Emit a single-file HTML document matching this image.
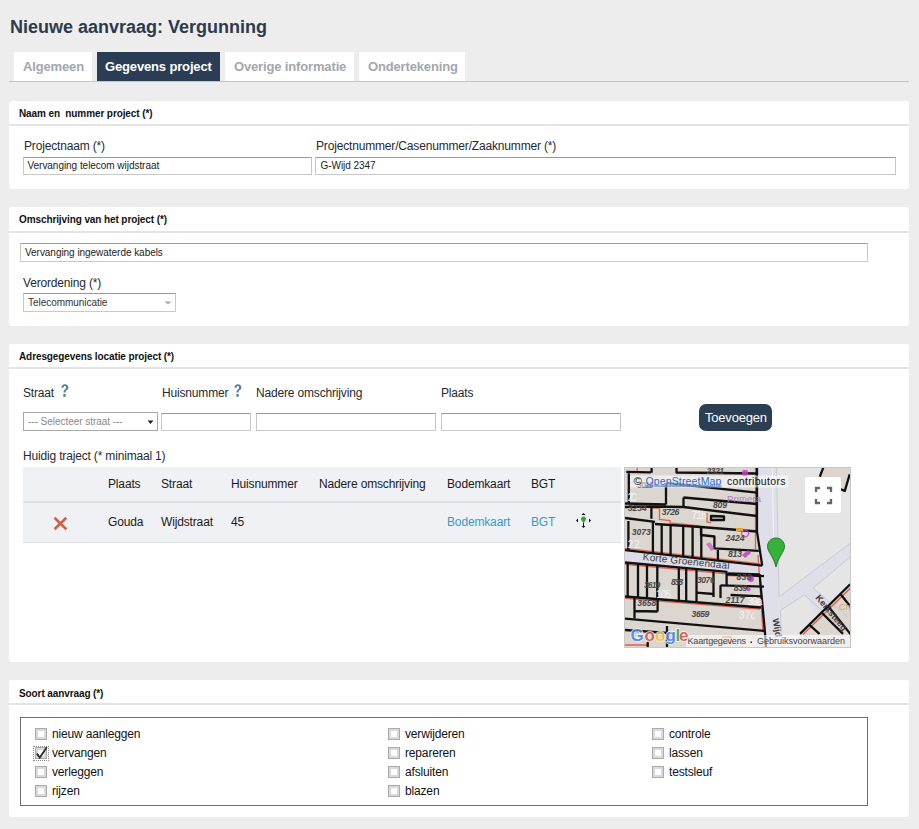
<!DOCTYPE html>
<html><head><meta charset="utf-8">
<style>
*{box-sizing:border-box;margin:0;padding:0}
html,body{width:919px;height:829px;overflow:hidden;background:#ededed;font-family:"Liberation Sans",sans-serif;color:#333}
.a{position:absolute;white-space:pre;line-height:1}
.title{left:10px;top:18px;font-size:18px;font-weight:bold;color:#2c3a4b}
.tab{position:absolute;top:52px;height:29px;background:#fff;color:#a3a7ab;font-weight:bold;font-size:13px;letter-spacing:-0.15px;line-height:1}
.tab span{position:absolute;top:8px;white-space:pre}
.tab.act{background:#2a3d54;color:#fff}
.tabline{position:absolute;left:9px;top:81px;width:900px;height:1px;background:#c4c4c4}
.panel{position:absolute;left:9px;width:900px;background:#fff;border-radius:3px}
.ph{position:absolute;left:0;top:0;width:100%;border-bottom:2px solid #e4e4e4}
.ph span{position:absolute;left:10px;font-size:10px;letter-spacing:-0.1px;font-weight:bold;color:#111;white-space:pre;line-height:1}
.lbl{position:absolute;font-size:12px;letter-spacing:-0.17px;line-height:1;white-space:pre;color:#252a30}
.inp{position:absolute;height:18px;border:1px solid #c9c9c9;border-top-color:#9a9a9a;background:#fff}
.inp span{position:absolute;left:4px;top:4px;font-size:10px;letter-spacing:-0.04px;line-height:1;white-space:pre;color:#222}
.q{position:absolute}
.th{position:absolute;font-size:12px;letter-spacing:-0.15px;line-height:1;white-space:pre;color:#1a1a1a}
.lnk{color:#3a9ac6}
.cb{position:absolute;width:12px;height:12px;border:1px solid #aaaaaa;background:#fff;box-shadow:inset 0 0 0 2px #d8d8de}
.cbt{position:absolute;font-size:12px;letter-spacing:-0.16px;line-height:1;white-space:pre;color:#111}
</style></head><body>
<div class="a title">Nieuwe aanvraag: Vergunning</div>

<div class="tab" style="left:14px;width:78px"><span style="left:9px">Algemeen</span></div>
<div class="tab act" style="left:97px;width:123px"><span style="left:8px">Gegevens project</span></div>
<div class="tab" style="left:225px;width:129px"><span style="left:9px">Overige informatie</span></div>
<div class="tab" style="left:359px;width:106px"><span style="left:9px">Ondertekening</span></div>
<div class="tabline"></div>

<!-- panel 1 -->
<div class="panel" style="top:101px;height:88px">
  <div class="ph" style="height:25px"><span style="top:8px">Naam en  nummer project (*)</span></div>
</div>
<div class="lbl" style="left:24px;top:140px">Projectnaam (*)</div>
<div class="lbl" style="left:316px;top:140px">Projectnummer/Casenummer/Zaaknummer (*)</div>
<div class="inp" style="left:23px;top:157px;width:289px"><span style="top:3px;left:3.5px">Vervanging telecom wijdstraat</span></div>
<div class="inp" style="left:315px;top:157px;width:581px"><span style="top:3px;left:4.5px">G-Wijd 2347</span></div>

<!-- panel 2 -->
<div class="panel" style="top:207px;height:119px">
  <div class="ph" style="height:26px"><span style="top:8px">Omschrijving van het project (*)</span></div>
</div>
<div class="inp" style="left:20px;top:243px;width:848px;height:19px"><span>Vervanging ingewaterde kabels</span></div>
<div class="lbl" style="left:23px;top:277px">Verordening (*)</div>
<div class="inp" style="left:23px;top:293px;width:153px;height:19px"><span style="color:#333">Telecommunicatie</span>
  <svg style="position:absolute;left:140px;top:7px" width="8" height="4"><path d="M0.5 0.5H7.5L4 3.5Z" fill="#a8a8a8"/></svg></div>

<!-- panel 3 -->
<div class="panel" style="top:344px;height:318px">
  <div class="ph" style="height:25px"><span style="top:8px">Adresgegevens locatie project (*)</span></div>
</div>
<div class="lbl" style="left:23px;top:387px">Straat</div>
<div class="lbl" style="left:162px;top:387px">Huisnummer</div>
<div class="lbl" style="left:256px;top:387px">Nadere omschrijving</div>
<div class="lbl" style="left:441px;top:387px">Plaats</div>
<svg class="q" style="left:60.6px;top:384px" width="8" height="13" viewBox="0 0 8 13"><path d="M0.4 3.7C0.5 1.6 1.9 0.3 4 0.3C6.1 0.3 7.4 1.6 7.4 3.5C7.4 4.9 6.6 5.6 5.6 6.3C4.9 6.8 4.6 7.2 4.6 8.6H2.5C2.5 6.8 2.9 6.1 3.9 5.4C4.7 4.8 5.1 4.4 5.1 3.6C5.1 2.7 4.6 2.1 3.8 2.1C3 2.1 2.6 2.8 2.5 3.7Z M2.3 10H4.7V12.8H2.3Z" fill="#5a7d9c"/></svg>
<svg class="q" style="left:234px;top:384px" width="8" height="13" viewBox="0 0 8 13"><path d="M0.4 3.7C0.5 1.6 1.9 0.3 4 0.3C6.1 0.3 7.4 1.6 7.4 3.5C7.4 4.9 6.6 5.6 5.6 6.3C4.9 6.8 4.6 7.2 4.6 8.6H2.5C2.5 6.8 2.9 6.1 3.9 5.4C4.7 4.8 5.1 4.4 5.1 3.6C5.1 2.7 4.6 2.1 3.8 2.1C3 2.1 2.6 2.8 2.5 3.7Z M2.3 10H4.7V12.8H2.3Z" fill="#5a7d9c"/></svg>
<div class="inp" style="left:23px;top:412px;width:135px;height:19px;border-color:#a9a9a9"><span style="color:#8a8a8a">--- Selecteer straat ---</span>
  <svg style="position:absolute;left:123px;top:7px" width="8" height="5"><path d="M0.5 0.5H6.5L3.5 4Z" fill="#222"/></svg></div>
<div class="inp" style="left:161px;top:413px;width:90px"></div>
<div class="inp" style="left:256px;top:413px;width:180px"></div>
<div class="inp" style="left:441px;top:413px;width:180px"></div>
<div style="position:absolute;left:699px;top:404px;width:73px;height:27px;background:#2c3e52;border-radius:7px"></div>
<div class="a" style="left:705px;top:411px;font-size:13px;letter-spacing:-0.2px;color:#fff">Toevoegen</div>
<div class="lbl" style="left:23px;top:450px">Huidig traject (* minimaal 1)</div>

<!-- table -->
<div style="position:absolute;left:23px;top:467px;width:598px;height:76px;background:#f0f1f4;border-bottom:1px solid #dfe0e3"></div>
<div style="position:absolute;left:23px;top:501px;width:598px;height:2px;background:#dedfe2"></div>
<div class="th" style="left:108px;top:478px">Plaats</div>
<div class="th" style="left:161px;top:478px">Straat</div>
<div class="th" style="left:231px;top:478px">Huisnummer</div>
<div class="th" style="left:319px;top:478px">Nadere omschrijving</div>
<div class="th" style="left:447px;top:478px">Bodemkaart</div>
<div class="th" style="left:531px;top:478px">BGT</div>
<div class="th" style="left:108px;top:516px">Gouda</div>
<div class="th" style="left:161px;top:516px">Wijdstraat</div>
<div class="th" style="left:231px;top:516px">45</div>
<div class="th lnk" style="left:447px;top:516px">Bodemkaart</div>
<div class="th lnk" style="left:531px;top:516px">BGT</div>
<svg style="position:absolute;left:52px;top:516px" width="17" height="15" viewBox="0 0 17 15"><path d="M2.5 1.8L14.3 13.2M14.3 1.8L2.5 13.2" stroke="#cf6148" stroke-width="2.6" stroke-linecap="butt"/></svg>
<svg style="position:absolute;left:575px;top:512px" width="17" height="17" viewBox="0 0 17 17"><path d="M8.5 1L6.5 3H10.5Z M8.5 16L6.5 14H10.5Z M1 8.5L3 6.5V10.5Z M16 8.5L14 6.5V10.5Z" fill="#111"/><path d="M8 10.5H9V14H8Z" fill="#111"/><path d="M8.5 4.5C10 4.5 11 5.6 11 7C11 8.6 9.5 9.6 8.5 11C7.5 9.6 6 8.6 6 7C6 5.6 7 4.5 8.5 4.5Z" fill="#2da835"/></svg>

<!-- map placeholder -->
<div id="map" style="position:absolute;left:624px;top:467px;width:227px;height:181px;background:#e5e4e4;border:1px solid #c8c8c8;overflow:hidden"><svg width="227" height="181" viewBox="0 0 227 181" style="position:absolute;left:-1px;top:-1px">
<defs><clipPath id="mc"><rect x="1" y="1" width="225" height="179"/></clipPath></defs>
<g clip-path="url(#mc)">
<rect width="227" height="181" fill="#e6e5e5"/>
<polygon points="0,0 134,0 134,83 136,107 142,167 143,181 0,181" fill="#dcd6d0"/>
<polygon points="199.5,0 227,0 227,7 221,24 196,10" fill="#ddd6cf"/>

<polygon points="134,0 152,0 153,60 156,181 143,181 136,107 135,83" fill="#dfdfe9"/>
<line x1="148.3" y1="0" x2="149.5" y2="72" stroke="#f3f3f7" stroke-width="1"/>
<polygon points="0,83 138.2,98.7 136,107.4 103.4,105.5 0,95.4" fill="#dedde7"/>
<polygon points="155.1,129.7 226.2,76.3 228,75 228,89 226.2,90 189,121.2 227,153 227,181 212,181 180.5,127.8 156.4,143.4" fill="#dfdfe9"/>
<polygon points="170,181 176,166.9 226.2,117.3 228,117 228,181" fill="#ddd6cf"/>
<path d="M155.1,129.7 L226.2,76.3 M156.4,143.4 L180.5,127.8 L216,160 M189,121.2 L226.2,90 M189,121.2 L224,150 M152.5,0 L155.1,129.7 M156.4,143.4 L157.7,181" stroke="#c2c2cc" stroke-width="0.8" fill="none"/>
<g stroke="#e0604c" stroke-width="1.3" fill="none">
<path d="M131.5,0 V82 M134,88 L139,165"/>
<path d="M28,41 H35.5 V52.5 L46,53.5 V56 L75.5,59 M83,46 V55 L87,55.5"/>
<path d="M0,81.2 L136.5,96.8 M0,97.2 L103,106.8 M103,108.6 L136,109.4 M0,131.2 L136,142.2"/>
<path d="M13.2,1 V5"/>
<path d="M179,167.5 L227,120.5"/>
<path d="M98,170 H107 V176 H98 M0,178 H25"/>
</g>
<g stroke="#111" stroke-width="2.3" fill="none" stroke-linejoin="round">
<path d="M133,0 V64.7 L138.2,98.7 M135.6,107 L141,166 L142,181"/>
<path d="M2.3,4.8 L27,5.4 M27.6,1 V5.8 M52.5,1 V5.5 L133,6.5 M4.8,5 V37 M42,16 V37.5 M1,36.5 L42,37.5"/>
<path d="M43,16 L133,25.6 M59.5,30.5 L133,37 M59.5,30.5 V40 M27.4,39 V51.8"/>
<path d="M1,40 L27.4,39.5 L59.5,40 L133,49"/>
<path d="M1,51 L31,54.8 M31,57 L77,60 L133,64.5"/>
<path d="M4.4,54 V83.5 M28.9,55 V86 M37.7,58 V87 M46.6,58.5 V88 M59.2,59 V89.5 M68.6,59.5 V90.5 M77.3,60 V91.5 M77,60 V68 L90.4,69.5 V81.3 L134.8,83.9 M93.9,83 V94"/>
<path d="M87,49 L100,49.5 V53 L87,53 Z"/>
<path d="M0,83 L138.2,98.7"/>
<path d="M0,95.4 L103.4,104.8 M103.4,106.5 L135.6,107.4"/>
<path d="M3.7,96 V129 M14,97 V130 M23,98 V131 M33.3,99 V132 M54.8,101 V134 M62.2,102 V134.5 M72.5,103 V135.5 M89.5,104.5 V130 M96.5,118.3 V131 M102.6,106 V118.3"/>
<path d="M102.6,107.4 L140,109.1 M96.5,118.3 L140,119.6 M72.5,125.7 L89.5,127 M106.6,128 L137,129.4"/>
<path d="M0,129.4 L137,140.5"/>
<path d="M10.5,131 V151.6 M10.5,144 L33.6,144.5 M33.6,133 V144.5"/>
<path d="M0,151.6 L141,164"/>
<path d="M1,163 L43,166 M43,159 V181 M23.7,175 V181"/>
<path d="M199.5,0 L195.8,9.75 M225.7,7.3 L220.8,23.8 L216,22"/>
<path d="M176,166.9 L226.2,117.3 M203.4,138.2 L228,169 M217,127.8 L227,140.5 M185.1,157.7 L195.5,166.9 M196.8,144.7 L219,166.9"/>
</g>
<g fill="#c23fc0" opacity="0.85">
<circle cx="127" cy="112" r="3"/><circle cx="124.5" cy="122" r="2.2"/>
<rect x="118" y="3" width="6" height="6" rx="2"/>
<circle cx="121" cy="15" r="2"/>
<path d="M121,70 a3.5,3.5 0 1 1 0.1,0" stroke="#c23fc0" stroke-width="1.3" fill="none"/>
<path d="M118,88 l6,-5 l3,3 l-6,5z"/>
<path d="M82,77 l4,-2 l5,7 l-4,2z" opacity="0.7"/>
</g>
<path d="M112,61 h7 v3 h-7z" fill="#e3a13a"/>
<g font-family="Liberation Sans" font-style="italic" font-weight="bold" font-size="8.6" fill="#4a4646">
<text x="82.6" y="7" textLength="17.4">2321</text>
<text x="13" y="20.5" textLength="16.5">3019</text>
<text x="89" y="41" textLength="14">809</text>
<text x="3.7" y="43.5" textLength="19">3234</text>
<text x="37.7" y="47.5" textLength="17.7">3726</text>
<text x="7.8" y="68" textLength="19">3073</text>
<text x="101.6" y="73.5" textLength="19">2424</text>
<text x="104" y="89.6" textLength="14">813</text>
<text x="20" y="121" textLength="16.3">3619</text>
<text x="47" y="118" textLength="12">838</text>
<text x="73" y="115.5" textLength="17.7">3076</text>
<text x="112.5" y="113" textLength="15">838</text>
<text x="109.8" y="124" textLength="13.6">839</text>
<text x="101.6" y="136" textLength="19">2117</text>
<text x="13.2" y="138.5" textLength="19">3658</text>
<text x="67.6" y="149.5" textLength="17.7">3659</text>
</g>
<g font-family="Liberation Sans" font-size="10" fill="#f6f4f2">
<text x="3.7" y="34" textLength="9.3">2C</text>
<text x="67.6" y="52" textLength="15">71b</text>
<text x="3.7" y="80.5" textLength="12">22</text>
<text x="32" y="130.5" textLength="15">105</text>
<text x="115" y="152" textLength="16.5">37c</text>
<text x="123.4" y="137.5" textLength="15">39a</text>
</g>
<text x="18.6" y="93" transform="rotate(6 18.6 93)" font-family="Liberation Sans" font-size="10" fill="#3a3a3a" textLength="87">Korte Groenendaal</text>
<text x="0" y="0" transform="translate(148.5,152) rotate(80)" font-family="Liberation Sans" font-size="9" font-weight="bold" fill="#3a3a3a">Wijd</text>
<text x="0" y="0" transform="translate(191,131) rotate(50)" font-family="Liberation Sans" font-size="9" font-weight="bold" fill="#3a3a3a">Kerksteeg</text>
<text x="103" y="35" font-family="Liberation Sans" font-size="9.5" fill="#b878cc" textLength="34">Primera</text>
<text x="215" y="143" font-family="Liberation Sans" font-size="9" fill="#d4a858">Ch</text>
<rect x="6" y="8.5" width="158" height="12" fill="#fff" opacity="0.55"/>
<text x="9.6" y="18" font-family="Liberation Sans" font-size="11.5" fill="#111" textLength="8">©</text>
<text x="21.4" y="17.5" font-family="Liberation Sans" font-size="10.5" fill="#2a6ac8" textLength="76" text-decoration="underline">OpenStreetMap</text>
<text x="103" y="17.5" font-family="Liberation Sans" font-size="10.5" fill="#111" textLength="58.5">contributors</text>
<path d="M152,71 C147.2,71 143.5,74.8 143.5,79.5 C143.5,85 149.5,89 152,100 C154.5,89 160.5,85 160.5,79.5 C160.5,74.8 156.8,71 152,71 Z" fill="#37b03c" stroke="#1d6e22" stroke-width="0.9"/>
<rect x="181" y="10" width="36" height="36" rx="2" fill="#fff"/>
<path d="M192,25 V21 H196 M203,21 H207 V25 M207,32 V36 H203 M196,36 H192 V32" stroke="#666" stroke-width="2.3" fill="none"/>
<rect x="62" y="168" width="165" height="13" fill="#fff" opacity="0.6"/>
<text x="63.5" y="176.8" font-family="Liberation Sans" font-size="9" fill="#444" textLength="58.5">Kaartgegevens</text>
<rect x="126.5" y="174.5" width="1.5" height="1.5" fill="#222"/>
<text x="133" y="176.8" font-family="Liberation Sans" font-size="9" fill="#444" textLength="88">Gebruiksvoorwaarden</text>
<g font-family="Liberation Sans" font-weight="bold" font-size="17" stroke="#fff" stroke-width="1.3" paint-order="stroke" opacity="0.9">
<text x="6.4" y="174" fill="#4a88e8">G</text><text x="20.5" y="174" fill="#e05545">o</text><text x="31" y="174" fill="#f4c020">o</text><text x="41.5" y="174" fill="#4a88e8">g</text><text x="51.5" y="174" fill="#3aa856">l</text><text x="55" y="174" fill="#e05545">e</text>
</g>
</g>
</svg></div>

<!-- panel 4 -->
<div class="panel" style="top:680px;height:137px">
  <div class="ph" style="height:25px"><span style="top:9px">Soort aanvraag (*)</span></div>
</div>
<div style="position:absolute;left:20px;top:717px;width:848px;height:89px;border:1px solid #6e6e6e"></div>
<div class="cb" style="left:35px;top:728px"></div><div class="cbt" style="left:52px;top:728px">nieuw aanleggen</div>
<div class="cb" style="left:35px;top:747px"></div><div class="cbt" style="left:52px;top:747px">vervangen</div>
<div class="cb" style="left:35px;top:766px"></div><div class="cbt" style="left:52px;top:766px">verleggen</div>
<div class="cb" style="left:35px;top:785px"></div><div class="cbt" style="left:52px;top:785px">rijzen</div>
<div class="cb" style="left:388px;top:728px"></div><div class="cbt" style="left:405px;top:728px">verwijderen</div>
<div class="cb" style="left:388px;top:747px"></div><div class="cbt" style="left:405px;top:747px">repareren</div>
<div class="cb" style="left:388px;top:766px"></div><div class="cbt" style="left:405px;top:766px">afsluiten</div>
<div class="cb" style="left:388px;top:785px"></div><div class="cbt" style="left:405px;top:785px">blazen</div>
<div class="cb" style="left:652px;top:728px"></div><div class="cbt" style="left:669px;top:728px">controle</div>
<div class="cb" style="left:652px;top:747px"></div><div class="cbt" style="left:669px;top:747px">lassen</div>
<div class="cb" style="left:652px;top:766px"></div><div class="cbt" style="left:669px;top:766px">testsleuf</div>
<div style="position:absolute;left:33px;top:746px;width:16px;height:15px;border:1px dotted #8a8a8a"></div>
<svg style="position:absolute;left:35px;top:746px" width="13" height="13" viewBox="0 0 13 13"><path d="M1.8 7.6L4.8 11.6L11.8 1.2" stroke="#2a2a35" stroke-width="1.8" fill="none"/></svg>

</body></html>
